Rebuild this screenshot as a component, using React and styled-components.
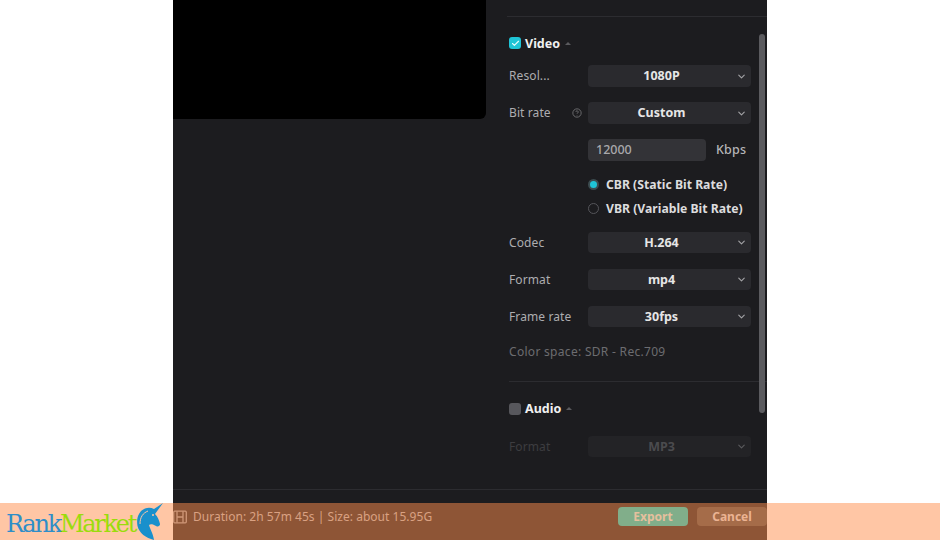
import React from 'react';
import styled, { createGlobalStyle } from 'styled-components';
import { ChevronDown, Check } from 'lucide-react';

const GlobalStyle = createGlobalStyle`
  html, body { margin: 0; padding: 0; background: #fff; }
  body { font-family: "Noto Sans", "Open Sans", sans-serif; }
`;

const Page = styled.div`
  position: relative;
  width: 940px;
  height: 540px;
  overflow: hidden;
  background: #fff;
`;

const Dialog = styled.div`
  width: 594px;
  height: 540px;
  margin-left: 173px;
  background: #1c1c1f;
  display: flex;
  flex-direction: column;
`;

const Body = styled.div`
  flex: 1;
  display: flex;
  min-height: 0;
`;

const Preview = styled.div`
  width: 313px;
  height: 119px;
  background: #000;
  border-bottom-right-radius: 6px;
  flex-shrink: 0;
`;

const Settings = styled.div`
  position: relative;
  flex: 1;
  padding: 16px 0 0 23px;
  display: flex;
  flex-direction: column;
`;

const Divider = styled.div`
  height: 1px;
  margin-left: ${p => p.$inset || 0}px;
  margin-top: ${p => p.$top || 0}px;
  background: #2c2c30;
`;

const Section = styled.div`
  display: flex;
  flex-direction: column;
  gap: ${p => p.$gap || 15.5}px;
  width: 242px;
`;

const SectionHead = styled.div`
  display: flex;
  align-items: center;
  gap: 4px;
  height: 16px;
  margin: ${p => p.$top}px 0 -1.5px;
  color: #f0f0f0;
  font-size: 12.5px;
  font-weight: 700;
`;

const Box = styled.span`
  width: 12px;
  height: 12px;
  border-radius: 3px;
  display: flex;
  align-items: center;
  justify-content: center;
  background: ${p => (p.$on ? '#1fc4d6' : '#57575c')};
  color: #e8fbfd;
`;

const Caret = styled.span`
  width: 0;
  height: 0;
  margin-left: 1px;
  border-left: 3px solid transparent;
  border-right: 3px solid transparent;
  border-bottom: 3px solid #5a5a5e;
`;

const Row = styled.div`
  display: grid;
  grid-template-columns: 79px 163px;
  align-items: center;
  height: 21.5px;
`;

const Label = styled.div`
  display: flex;
  align-items: center;
  justify-content: space-between;
  padding-right: 6px;
  font-size: 12px;
  letter-spacing: 0.1px;
  color: ${p => (p.$dim ? '#3d3d40' : '#adadb0')};
`;

const Help = styled.svg`
  width: 10px;
  height: 10px;
  color: #77777a;
`;

const SelectBox = styled.div`
  position: relative;
  height: 21.5px;
  padding-right: 16px;
  box-sizing: border-box;
  border-radius: 4px;
  background: ${p => (p.$dim ? '#232326' : '#2a2a2e')};
  display: flex;
  align-items: center;
  justify-content: center;
  font-size: 12.5px;
  font-weight: 700;
  color: ${p => (p.$dim ? '#4b4b4e' : '#e6e6e6')};
  svg {
    position: absolute;
    right: 4px;
    top: 5.5px;
    color: ${p => (p.$dim ? '#5a5a5d' : '#a2a2a5')};
  }
`;

const BitrateField = styled.div`
  display: flex;
  align-items: center;
  gap: 10px;
  font-size: 12.5px;
  font-weight: 500;
  letter-spacing: 0.2px;
  color: #b5b5b8;
`;

const Input = styled.div`
  width: 110px;
  height: 21.5px;
  padding-left: 8px;
  border-radius: 4px;
  background: #333337;
  display: flex;
  align-items: center;
  color: #a9a9ac;
  letter-spacing: 0;
`;

const RadioGroup = styled.div`
  display: flex;
  flex-direction: column;
  gap: 8px;
  margin-left: 79px;
`;

const RadioRow = styled.div`
  display: flex;
  align-items: center;
  gap: 7px;
  height: 16px;
  font-size: 12.2px;
  font-weight: 700;
  white-space: nowrap;
  color: #dcdcde;
`;

const Radio = styled.span`
  box-sizing: border-box;
  width: 11px;
  height: 11px;
  border-radius: 50%;
  flex-shrink: 0;
  border: ${p => (p.$on ? '2px solid #3c4c50' : '1.5px solid #55555a')};
  background: ${p => (p.$on ? '#1fc4d6' : 'transparent')};
`;

const Note = styled.div`
  margin-top: 16.5px;
  height: 16px;
  line-height: 16px;
  font-size: 12px;
  letter-spacing: 0.3px;
  color: #6c6c70;
`;

const Scrollbar = styled.div`
  position: absolute;
  top: 34px;
  right: 2px;
  width: 6px;
  height: 379px;
  border-radius: 3px;
  background: #5b5b5f;
`;

const Footer = styled.div`
  height: 51px;
  flex-shrink: 0;
  border-top: 1px solid #2c2c30;
  display: flex;
  align-items: flex-start;
  padding-top: 17px;
  box-sizing: border-box;
`;

const Summary = styled.div`
  flex: 1;
  display: flex;
  align-items: center;
  gap: 6px;
  height: 19px;
  font-size: 12px;
  letter-spacing: 0.03px;
  color: #b4b4b8;
`;

const Actions = styled.div`
  display: flex;
  gap: 9px;
`;

const Action = styled.div`
  width: 70px;
  height: 19px;
  border-radius: 4px;
  display: flex;
  align-items: center;
  justify-content: center;
  font-size: 12px;
  font-weight: 700;
  background: ${p => (p.$primary ? '#00cec8' : '#494946')};
  color: ${p => (p.$primary ? '#cdf0ef' : '#d8d8d8')};
`;

// the watermark strip lies over the whole page
const Band = styled.div`
  position: absolute;
  left: 0;
  right: 0;
  bottom: 0;
  height: 37px;
  background: rgba(255, 142, 78, 0.504);
  pointer-events: none;
`;

const Logo = styled.div`
  position: absolute;
  left: 6px;
  bottom: 0;
  height: 37px;
  display: flex;
  align-items: flex-end;
  font-family: "DejaVu Serif", "Liberation Serif", serif;
  font-size: 24px;
  letter-spacing: -2.25px;
  line-height: 30px;
  padding-bottom: 1px;
  box-sizing: border-box;
`;

const Rank = styled.span`
  color: #2f8ec8;
`;

const Market = styled.span`
  color: #9bdc0c;
`;

const Unicorn = styled.svg`
  width: 29px;
  height: 37px;
  margin-left: 1px;
  margin-bottom: -1px;
`;

function Select({ value, dim }) {
  return (
    <SelectBox $dim={dim}>
      {value}
      <ChevronDown size={11} strokeWidth={2.5} />
    </SelectBox>
  );
}

function Field({ label, value, dim, help }) {
  return (
    <Row>
      <Label $dim={dim}>
        {label}
        {help && (
          <Help viewBox="0 0 12 12" fill="none" stroke="currentColor">
            <circle cx="6" cy="6" r="5" />
            <path d="M4.6 4.8a1.4 1.4 0 1 1 2.1 1.2c-.5.3-.7.6-.7 1.1M6 8.6v.6" />
          </Help>
        )}
      </Label>
      <Select value={value} dim={dim} />
    </Row>
  );
}

export default function App() {
  return (
    <Page>
      <GlobalStyle />
      <Dialog>
        <Body>
          <Preview />
          <Settings>
            <Divider $inset={-2} />
            <Section>
              <SectionHead $top={18}>
                <Box $on><Check size={9} strokeWidth={3} /></Box>
                Video
                <Caret />
              </SectionHead>
              <Field label="Resol..." value="1080P" />
              <Field label="Bit rate" value="Custom" help />
              <Row>
                <span />
                <BitrateField>
                  <Input>12000</Input>
                  Kbps
                </BitrateField>
              </Row>
              <RadioGroup>
                <RadioRow><Radio $on />CBR (Static Bit Rate)</RadioRow>
                <RadioRow><Radio />VBR (Variable Bit Rate)</RadioRow>
              </RadioGroup>
              <Field label="Codec" value="H.264" />
              <Field label="Format" value="mp4" />
              <Field label="Frame rate" value="30fps" />
            </Section>
            <Note>Color space: SDR - Rec.709</Note>
            <Divider $top={21} />
            <Section $gap={20.5}>
              <SectionHead $top={19}>
                <Box />
                Audio
                <Caret />
              </SectionHead>
              <Field label="Format" value="MP3" dim />
            </Section>
            <Scrollbar />
          </Settings>
        </Body>
        <Footer>
          <Summary>
            <svg width="14" height="14" viewBox="0 0 14 14" fill="none" stroke="#a0a0a4" strokeWidth="1.3">
              <rect x="0.7" y="1.2" width="12.6" height="11.6" rx="1" />
              <path d="M4 1.2v11.6M10 1.2v11.6M4 7h6" />
            </svg>
            Duration: 2h 57m 45s | Size: about 15.95G
          </Summary>
          <Actions>
            <Action $primary>Export</Action>
            <Action>Cancel</Action>
          </Actions>
        </Footer>
      </Dialog>
      <Band />
      <Logo>
        <Rank>Rank</Rank>
        <Market>Market</Market>
        <Unicorn viewBox="0 0 29 37">
          <path
            fill="#1a90cc"
            d="M27 0 19 11c3 3 4 6 5 10 .3 1.500-1.500 3-3 2.500l-4-2c-1.500-.5-3-.5-4 .5 1 4 4 8 5 15C10 35 3 30 1.500 23 0 15 3 8 9 5.500c3-1 6-1 9 .5z"
          />
          <path fill="none" stroke="#ffc6a6" strokeWidth="1" d="M4 21C4 14 7 10 12 8" />
          <circle cx="17" cy="12" r="1" fill="#ffc6a6" />
        </Unicorn>
      </Logo>
    </Page>
  );
}
